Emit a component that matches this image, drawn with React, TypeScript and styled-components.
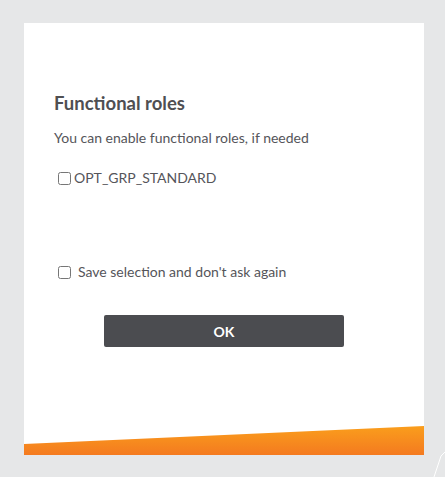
import React from 'react';
import styled, { createGlobalStyle } from 'styled-components';

const GlobalStyle = createGlobalStyle`
  html, body {
    margin: 0;
    padding: 0;
    background: #e6e7e8;
    font-family: Lato, "Liberation Sans", sans-serif;
  }
`;

const Screen = styled.div`
  position: relative;
  width: 445px;
  height: 477px;
  overflow: hidden;
  padding: 23px 0 0 24px;
  box-sizing: border-box;
`;

const Card = styled.div`
  width: 400px;
  height: 432px;
  background: #ffffff;
  display: flex;
  flex-direction: column;
`;

const Body = styled.div`
  padding: 69px 30px 0 30px;
  display: flex;
  flex-direction: column;
`;

const Title = styled.h2`
  margin: 0;
  font-size: 18.5px;
  font-weight: 700;
  color: #4f4f52;
  line-height: 22px;
`;

const Subtitle = styled.p`
  margin: 15px 0 0 0;
  font-size: 14px;
  color: #55555a;
  line-height: 18px;
`;

const Option = styled.label<{ $gap: number }>`
  display: flex;
  align-items: center;
  gap: ${p => p.$gap}px;
  font-size: 14px;
  color: #55555a;
  line-height: 18px;
  padding-left: 4px;
`;

const RoleList = styled.div`
  margin-top: 22px;
  height: 94px;
`;

const Box = styled.input`
  margin: 0;
  width: 13px;
  height: 13px;
`;

const ButtonRow = styled.div`
  display: flex;
  justify-content: center;
  margin-top: 34px;
`;

const OkButton = styled.button`
  width: 240px;
  height: 32px;
  border: none;
  border-radius: 2px;
  background: #4b4c50;
  color: #ffffff;
  font-family: Lato, "Liberation Sans", sans-serif;
  font-size: 14px;
  font-weight: 700;
`;

const Wedge = styled.div`
  margin-top: auto;
  height: 29px;
  background: linear-gradient(180deg, #fa9e1c 0%, #f47a20 100%);
  clip-path: polygon(0 18px, 100% 0, 100% 100%, 0 100%);
`;

const Streak = styled.svg`
  position: absolute;
  right: 0;
  bottom: 0;
`;

export default function App() {
  return (
    <Screen>
      <GlobalStyle />
      <Card>
        <Body>
          <Title>Functional roles</Title>
          <Subtitle>You can enable functional roles, if needed</Subtitle>
          <RoleList>
            <Option $gap={3}>
              <Box type="checkbox" />
              OPT_GRP_STANDARD
            </Option>
          </RoleList>
          <Option $gap={7}>
            <Box type="checkbox" />
            Save selection and don't ask again
          </Option>
          <ButtonRow>
            <OkButton>OK</OkButton>
          </ButtonRow>
        </Body>
        <Wedge />
      </Card>
      <Streak width="12" height="26" viewBox="0 0 12 26">
        <path d="M1 26 L8 5 L12 1" stroke="#ffffff" strokeWidth="1" fill="none" />
      </Streak>
    </Screen>
  );
}
